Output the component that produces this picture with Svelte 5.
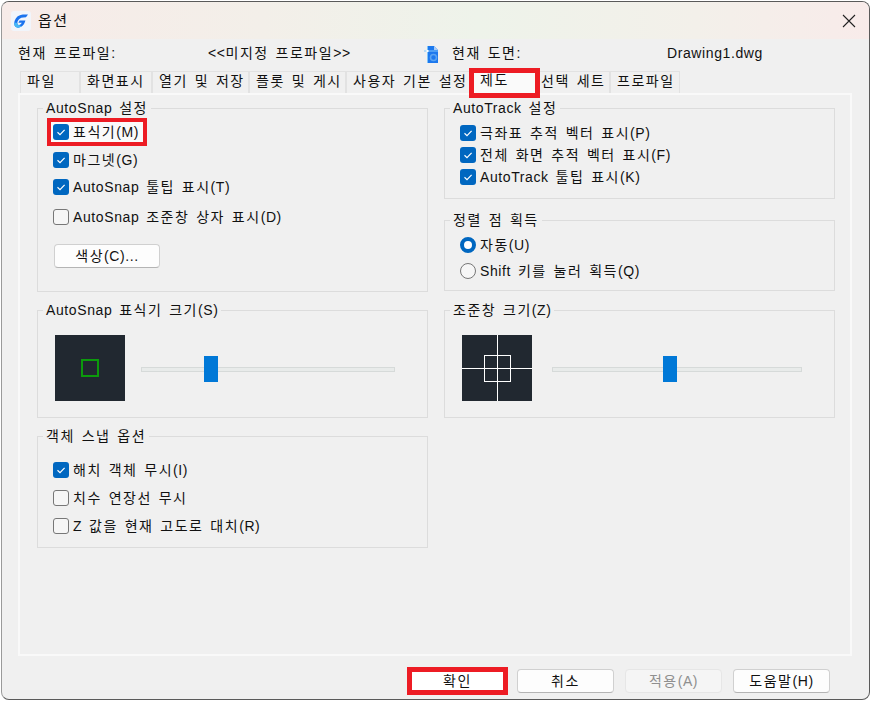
<script>
  const tabs = [
    { label: '파일' }, { label: '화면표시' }, { label: '열기 및 저장' }, { label: '플롯 및 게시' },
    { label: '사용자 기본 설정' }, { label: '제도', active: true }, { label: '선택 세트', tight: true }, { label: '프로파일' }
  ];
  const snap = [
    { label: '마그넷(G)', on: true },
    { label: 'AutoSnap 툴팁 표시(T)', on: true },
    { label: 'AutoSnap 조준창 상자 표시(D)', on: false }
  ];
  const track = ['극좌표 추적 벡터 표시(P)', '전체 화면 추적 벡터 표시(F)', 'AutoTrack 툴팁 표시(K)'];
  const osnap = [
    { label: '해치 객체 무시(I)', on: true },
    { label: '치수 연장선 무시', on: false },
    { label: 'Z 값을 현재 고도로 대치(R)', on: false }
  ];
  function runs(s) {
    return (s.match(/[\uac00-\ud7a3 ]+|[^\uac00-\ud7a3 ]+/g) || []).map((t) => ({ t, ko: /[\uac00-\ud7a3]/.test(t) }));
  }
</script>

{#snippet txt(s)}{#each runs(s) as r}<span class:ko={r.ko}>{r.t}</span>{/each}{/snippet}

{#snippet check(on)}
  <span class="box" class:on>
    {#if on}
      <svg width="16" height="16" viewBox="0 0 16 16"><path d="M4.5 8.3 L7 10.6 L11.6 5.8" fill="none" stroke="#fff" stroke-width="1.2"/></svg>
    {/if}
  </span>
{/snippet}

<div class="window">
  <header class="title">
    <svg class="logo" width="20" height="20" viewBox="0 0 20 20">
      <rect width="20" height="20" rx="3" fill="#f1f5fb"/>
      <path d="M17 3.5 C12 3.2 8.5 3.6 6.4 5.6 C3.6 8.2 2.6 12.2 3.6 14.6 C4.6 17 8 17.2 10.6 15.6 C12.4 14.5 13.6 12.6 14.4 9.6 L8.6 9.6 L7.4 11.8 L10.8 11.8 C10.2 13 9.2 13.9 8 14 C6.4 14.1 6 12.6 6.6 10.6 C7.4 8 9.4 6.6 12.4 6.4 L15 6.2 Z" fill="#1a73ee"/>
      <path d="M3.6 14.6 C4.6 17 8 17.2 10.6 15.6 L8 14 C6.8 14.1 6.2 13.2 6.3 12 L3.4 11.6 C3.2 12.8 3.3 13.8 3.6 14.6 Z" fill="#45b8f5"/>
    </svg>
    <span class="title-text ko">옵션</span>
    <svg class="close" width="14" height="14" viewBox="0 0 14 14"><path d="M1 1 L13 13 M13 1 L1 13" stroke="#222" stroke-width="1.1"/></svg>
  </header>

  <div class="info">
    <span>{@render txt('현재 프로파일:')}</span>
    <span>{@render txt('<<미지정 프로파일>>')}</span>
    <svg class="doc" width="15" height="17" viewBox="0 0 15 17">
      <path d="M3 0 H10 L14 4 V17 H3 Z" fill="#1c78ee"/>
      <path d="M10 0 V4 H14 Z" fill="#a9ccf7"/>
      <path d="M0 5 H14 M3.5 0 V17" stroke="#7fc4fa" stroke-width="1"/>
      <rect x="2.5" y="4" width="2" height="2" fill="#fff"/>
      <circle cx="9.5" cy="11.5" r="3" fill="none" stroke="#5aa4f2" stroke-width="1.6"/>
    </svg>
    <span>{@render txt('현재 도면:')}</span>
    <span>{@render txt('Drawing1.dwg')}</span>
  </div>

  <nav class="tabs">
    {#each tabs as t}
      <div class="tab" class:active={t.active} class:tight={t.tight}>{@render txt(t.label)}</div>
    {/each}
  </nav>

  <main class="panel">
    <div class="col">
      <fieldset class="g-snap">
        <legend>{@render txt('AutoSnap 설정')}</legend>
        <div class="snap-rows">
          <div class="row"><label class="row-in marked">{@render check(true)}<span>{@render txt('표식기(M)')}</span></label></div>
          {#each snap as c}
            <div class="row"><label class="row-in">{@render check(c.on)}<span>{@render txt(c.label)}</span></label></div>
          {/each}
        </div>
        <button class="btn color">{@render txt('색상(C)...')}</button>
      </fieldset>

      <fieldset class="g-size">
        <legend>{@render txt('AutoSnap 표식기 크기(S)')}</legend>
        <div class="size">
          <div class="preview"><span class="green"></span></div>
          <div class="slider s1"><span class="thumb"></span></div>
        </div>
      </fieldset>

      <fieldset class="g-osnap">
        <legend>{@render txt('객체 스냅 옵션')}</legend>
        <div class="osnap-rows">
          {#each osnap as c}
            <div class="row"><label class="row-in">{@render check(c.on)}<span>{@render txt(c.label)}</span></label></div>
          {/each}
        </div>
      </fieldset>
    </div>

    <div class="col">
      <fieldset class="g-track">
        <legend>{@render txt('AutoTrack 설정')}</legend>
        <div class="track-rows">
          {#each track as t}
            <div class="row"><label class="row-in">{@render check(true)}<span>{@render txt(t)}</span></label></div>
          {/each}
        </div>
      </fieldset>

      <fieldset class="g-align">
        <legend>{@render txt('정렬 점 획득')}</legend>
        <div class="align-rows">
          <div class="row"><label class="row-in"><span class="radio on"></span><span>{@render txt('자동(U)')}</span></label></div>
          <div class="row"><label class="row-in"><span class="radio"></span><span>{@render txt('Shift 키를 눌러 획득(Q)')}</span></label></div>
        </div>
      </fieldset>

      <fieldset class="g-size g-aim">
        <legend>{@render txt('조준창 크기(Z)')}</legend>
        <div class="size">
          <div class="preview aim"><span class="h"></span><span class="v"></span><span class="sq"></span></div>
          <div class="slider s2"><span class="thumb"></span></div>
        </div>
      </fieldset>
    </div>
  </main>

  <footer class="foot">
    <button class="btn ok">{@render txt('확인')}</button>
    <button class="btn">{@render txt('취소')}</button>
    <button class="btn off">{@render txt('적용(A)')}</button>
    <button class="btn">{@render txt('도움말(H)')}</button>
  </footer>
</div>

<style>
  :global(body) { background: #fff; }
  .window {
    box-sizing: border-box;
    width: 869px;
    height: 699px;
    margin: 1px 0 0 1px;
    background: #f0f0f0;
    border: 1px solid #5a5a5a;
    border-left-color: #9a9a9a;
    border-radius: 8px;
    overflow: hidden;
    font: 14px/20px "Liberation Sans", "Noto Sans CJK KR", sans-serif;
    letter-spacing: 0.6px;
    color: #111;
  }
  .ko { letter-spacing: 1.5px; word-spacing: 1.5px; }
  .title {
    height: 37px;
    display: flex;
    align-items: center;
    padding: 0 13px 0 9px;
    background: linear-gradient(90deg, #f7ebe8 0%, #f3efe9 30%, #eef3ea 55%, #f3f0ea 80%, #f8ebea 100%);
  }
  .title-text { margin-left: 7px; font-size: 15px; }
  .close { margin-left: auto; }
  .info {
    box-sizing: border-box;
    height: 32px;
    padding: 0 0 5px 16px;
    display: grid;
    grid-template-columns: 190px 216px 28px 215px auto;
    align-items: center;
  }
  .doc { margin-top: 4px; }
  .tabs {
    display: grid;
    grid-template-columns: 60px 72px 97px 97px 125px 67px 72px 70px;
    height: 22px;
    margin-left: 18px;
    width: fit-content;
    position: relative;
  }
  .tab {
    box-sizing: border-box;
    border: 1px solid #e2e2e2;
    border-bottom: 0;
    padding-left: 6px;
    white-space: nowrap;
    line-height: 19px;
    overflow: hidden;
  }
  .tab.tight { padding-left: 2px; }
  .tab.active {
    background: #fafafa;
    margin: -1px 0 -3px;
    line-height: 20px;
    padding-left: 9px;
    border: 0;
    outline: 5px solid #ed1c24;
    outline-offset: -3px;
    border-radius: 0;
    position: relative;
    z-index: 2;
    overflow: visible;
  }
  .panel {
    box-sizing: border-box;
    width: 834px;
    height: 563px;
    margin-left: 16px;
    border: 2px solid #f9f9f9;
    padding: 5px 15px 0 17px;
    display: grid;
    grid-template-columns: 391px 391px;
    column-gap: 16px;
    align-items: start;
  }
  .col { display: flex; flex-direction: column; }
  fieldset {
    box-sizing: border-box;
    margin: 0;
    padding: 0 0 0 15px;
    min-width: 0;
    border: 1px solid #dcdcdc;
  }
  legend {
    margin-left: -10px;
    padding: 0 3px;
    line-height: 16px;
    white-space: nowrap;
  }
  .g-snap { height: 192px; }
  .g-size { height: 116px; margin-top: 10px; padding-left: 17px; }
  .g-size legend { margin-left: -12px; }
  .g-osnap { height: 120px; margin-top: 10px; }
  .g-track { height: 99px; }
  .g-align { height: 79px; margin-top: 13px; }
  .g-aim { margin-top: 11px; }
  .snap-rows { display: grid; grid-template-rows: 28px 28px 26px 34px; margin-top: 2px; }
  .track-rows { display: grid; grid-template-rows: 23px 22px 22px; padding-top: 5px; }
  .align-rows { display: grid; grid-template-rows: 26px 26px; padding-top: 4px; }
  .osnap-rows { display: grid; grid-template-rows: 28px 28px 28px; padding-top: 12px; }
  .row { display: flex; align-items: center; }
  .row-in { display: flex; align-items: center; gap: 4px; white-space: nowrap; }
  .marked {
    margin-left: -2px;
    padding: 0 4px 0 2px;
    width: 86px;
    height: 20px;
    background: #fafafa;
    outline: 4px solid #ed1c24;
  }
  .box {
    box-sizing: border-box;
    width: 16px;
    height: 16px;
    flex: none;
    border-radius: 3px;
    border: 1px solid #777;
    background: #f6f6f6;
    display: block;
  }
  .box.on { background: #0067c0; border: 0; }
  .box svg { display: block; }
  .radio {
    box-sizing: border-box;
    width: 16px;
    height: 16px;
    flex: none;
    border-radius: 50%;
    border: 1px solid #777;
    background: #f6f6f6;
  }
  .radio.on { border: 4.5px solid #0067c0; background: #fff; }
  .btn {
    box-sizing: border-box;
    width: 97px;
    height: 24px;
    padding: 0;
    font: inherit;
    letter-spacing: inherit;
    line-height: 20px;
    color: inherit;
    background: #fdfdfd;
    border: 1px solid #d0d0d0;
    border-bottom-color: #b4b4b4;
    border-radius: 4px;
  }
  .color { width: 106px; margin: 10px 0 0 1px; display: block; }
  .off { background: #f5f5f5; color: #8f8f8f; border-color: #e6e6e6; }
  .ok { outline: 5px solid #ed1c24; outline-offset: -3px; background: #fff; border-radius: 0; border: 0; }
  .size { display: flex; align-items: center; padding-top: 17px; }
  .preview {
    width: 70px;
    height: 66px;
    flex: none;
    background: #212830;
    position: relative;
    display: flex;
    align-items: center;
    justify-content: center;
  }
  .green { width: 18px; height: 18px; box-sizing: border-box; border: 2px solid #0c9a0c; }
  .aim .h { position: absolute; left: 0; right: 0; top: 33px; height: 1px; background: #fff; }
  .aim .v { position: absolute; top: 0; bottom: 0; left: 35px; width: 1px; background: #fff; }
  .aim .sq { position: absolute; left: 22px; top: 20px; width: 27px; height: 27px; box-sizing: border-box; border: 1px solid #fff; }
  .slider {
    box-sizing: border-box;
    height: 5px;
    margin-top: 3px;
    background: #e8ebea;
    border: 1px solid #d6dad9;
    position: relative;
  }
  .s1 { width: 254px; margin-left: 16px; }
  .s2 { width: 250px; margin-left: 20px; }
  .thumb {
    position: absolute;
    top: -12px;
    width: 14px;
    height: 26px;
    background: #0078d7;
  }
  .s1 .thumb { left: 62px; }
  .s2 .thumb { left: 110px; }
  .foot {
    display: flex;
    gap: 11px;
    justify-content: flex-end;
    padding: 13px 39px 0 0;
  }
</style>
